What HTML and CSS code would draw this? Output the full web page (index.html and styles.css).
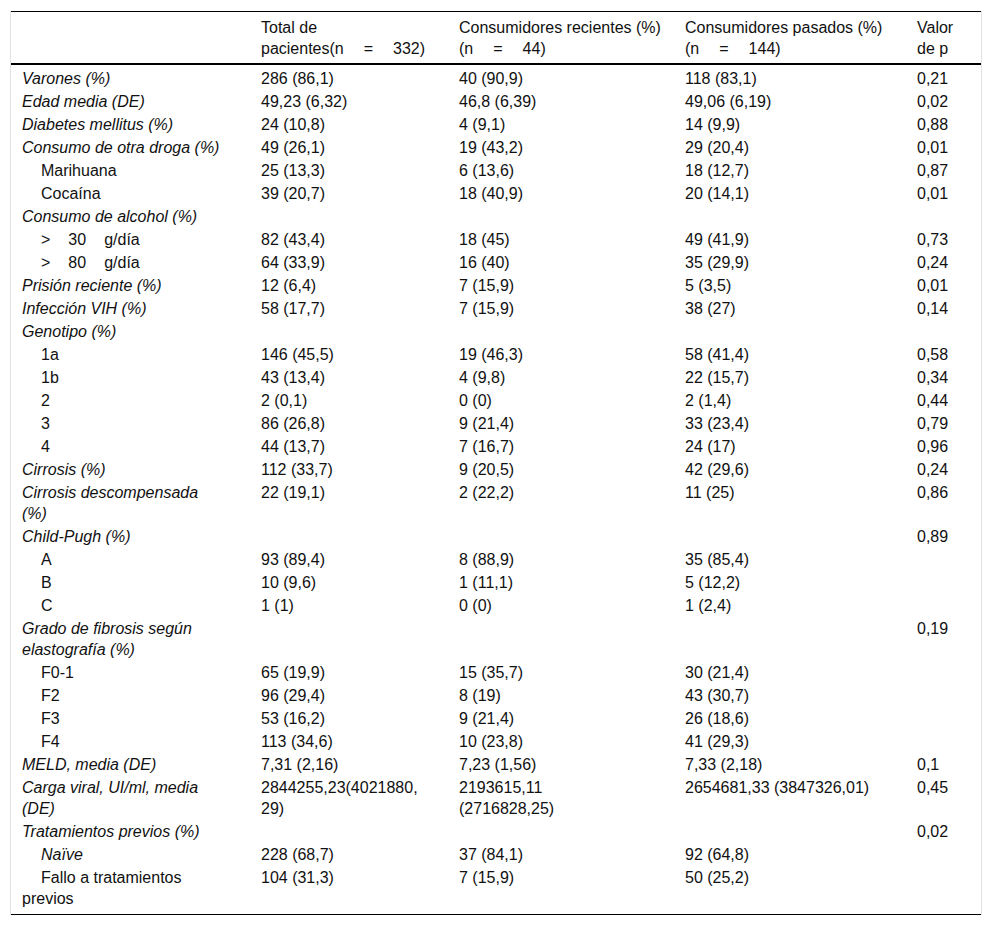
FILE: index.html
```html
<!DOCTYPE html>
<html lang="es">
<head>
<meta charset="utf-8">
<title>Tabla</title>
<link rel="stylesheet" href="styles.css">
</head>
<body>
<div class="wrap">
<table class="data">
<colgroup>
<col class="c1"><col class="c2"><col class="c3"><col class="c4"><col class="c5">
</colgroup>
<thead>
<tr>
<th></th>
<th>Total de<br>pacientes(n<span class="eq">=</span>332)</th>
<th>Consumidores recientes (%)<br>(n<span class="eq">=</span>44)</th>
<th>Consumidores pasados (%)<br>(n<span class="eq">=</span>144)</th>
<th>Valor<br>de p</th>
</tr>
</thead>
<tbody>
<tr><td class="lbl">Varones (%)</td><td>286 (86,1)</td><td>40 (90,9)</td><td>118 (83,1)</td><td>0,21</td></tr>
<tr><td class="lbl">Edad media (DE)</td><td>49,23 (6,32)</td><td>46,8 (6,39)</td><td>49,06 (6,19)</td><td>0,02</td></tr>
<tr><td class="lbl">Diabetes mellitus (%)</td><td>24 (10,8)</td><td>4 (9,1)</td><td>14 (9,9)</td><td>0,88</td></tr>
<tr><td class="lbl">Consumo de otra droga (%)</td><td>49 (26,1)</td><td>19 (43,2)</td><td>29 (20,4)</td><td>0,01</td></tr>
<tr><td class="sub">Marihuana</td><td>25 (13,3)</td><td>6 (13,6)</td><td>18 (12,7)</td><td>0,87</td></tr>
<tr><td class="sub">Cocaína</td><td>39 (20,7)</td><td>18 (40,9)</td><td>20 (14,1)</td><td>0,01</td></tr>
<tr><td class="lbl">Consumo de alcohol (%)</td><td></td><td></td><td></td><td></td></tr>
<tr><td class="sub">&gt;<span class="gap"></span>30<span class="gap"></span>g/día</td><td>82 (43,4)</td><td>18 (45)</td><td>49 (41,9)</td><td>0,73</td></tr>
<tr><td class="sub">&gt;<span class="gap"></span>80<span class="gap"></span>g/día</td><td>64 (33,9)</td><td>16 (40)</td><td>35 (29,9)</td><td>0,24</td></tr>
<tr><td class="lbl">Prisión reciente (%)</td><td>12 (6,4)</td><td>7 (15,9)</td><td>5 (3,5)</td><td>0,01</td></tr>
<tr><td class="lbl">Infección VIH (%)</td><td>58 (17,7)</td><td>7 (15,9)</td><td>38 (27)</td><td>0,14</td></tr>
<tr><td class="lbl">Genotipo (%)</td><td></td><td></td><td></td><td></td></tr>
<tr><td class="sub">1a</td><td>146 (45,5)</td><td>19 (46,3)</td><td>58 (41,4)</td><td>0,58</td></tr>
<tr><td class="sub">1b</td><td>43 (13,4)</td><td>4 (9,8)</td><td>22 (15,7)</td><td>0,34</td></tr>
<tr><td class="sub">2</td><td>2 (0,1)</td><td>0 (0)</td><td>2 (1,4)</td><td>0,44</td></tr>
<tr><td class="sub">3</td><td>86 (26,8)</td><td>9 (21,4)</td><td>33 (23,4)</td><td>0,79</td></tr>
<tr><td class="sub">4</td><td>44 (13,7)</td><td>7 (16,7)</td><td>24 (17)</td><td>0,96</td></tr>
<tr><td class="lbl">Cirrosis (%)</td><td>112 (33,7)</td><td>9 (20,5)</td><td>42 (29,6)</td><td>0,24</td></tr>
<tr><td class="lbl">Cirrosis descompensada<br>(%)</td><td>22 (19,1)</td><td>2 (22,2)</td><td>11 (25)</td><td>0,86</td></tr>
<tr><td class="lbl">Child-Pugh (%)</td><td></td><td></td><td></td><td>0,89</td></tr>
<tr><td class="sub">A</td><td>93 (89,4)</td><td>8 (88,9)</td><td>35 (85,4)</td><td></td></tr>
<tr><td class="sub">B</td><td>10 (9,6)</td><td>1 (11,1)</td><td>5 (12,2)</td><td></td></tr>
<tr><td class="sub">C</td><td>1 (1)</td><td>0 (0)</td><td>1 (2,4)</td><td></td></tr>
<tr><td class="lbl">Grado de fibrosis según<br>elastografía (%)</td><td></td><td></td><td></td><td>0,19</td></tr>
<tr><td class="sub">F0-1</td><td>65 (19,9)</td><td>15 (35,7)</td><td>30 (21,4)</td><td></td></tr>
<tr><td class="sub">F2</td><td>96 (29,4)</td><td>8 (19)</td><td>43 (30,7)</td><td></td></tr>
<tr><td class="sub">F3</td><td>53 (16,2)</td><td>9 (21,4)</td><td>26 (18,6)</td><td></td></tr>
<tr><td class="sub">F4</td><td>113 (34,6)</td><td>10 (23,8)</td><td>41 (29,3)</td><td></td></tr>
<tr><td class="lbl">MELD, media (DE)</td><td>7,31 (2,16)</td><td>7,23 (1,56)</td><td>7,33 (2,18)</td><td>0,1</td></tr>
<tr><td class="lbl">Carga viral, UI/ml, media<br>(DE)</td><td>2844255,23(4021880,<br>29)</td><td>2193615,11<br>(2716828,25)</td><td>2654681,33 (3847326,01)</td><td>0,45</td></tr>
<tr><td class="lbl">Tratamientos previos (%)</td><td></td><td></td><td></td><td>0,02</td></tr>
<tr><td class="sub lbl">Naïve</td><td>228 (68,7)</td><td>37 (84,1)</td><td>92 (64,8)</td><td></td></tr>
<tr class="last"><td class="sub">Fallo a tratamientos<br>previos</td><td>104 (31,3)</td><td>7 (15,9)</td><td>50 (25,2)</td><td></td></tr>
</tbody>
</table>
</div>
</body>
</html>
```

FILE: styles.css
```css
html, body {
  margin: 0;
  padding: 0;
  background: #ffffff;
}

body {
  font-family: "Liberation Sans", Arial, sans-serif;
  font-size: 16px;
  color: #111111;
}

.wrap {
  margin: 11px 10px 0 10px;
  border-left: 1px solid #e2e2e2;
  border-right: 1px solid #e2e2e2;
}

.data {
  width: 100%;
  table-layout: fixed;
  border-collapse: collapse;
  border-top: 1px solid #000000;
  border-bottom: 1px solid #000000;
}

.c1 { width: 239px; }
.c2 { width: 198px; }
.c3 { width: 226px; }
.c4 { width: 232px; }
.c5 { width: 75px; }

.data th,
.data td {
  text-align: left;
  vertical-align: top;
  white-space: nowrap;
  line-height: 21px;
  padding: 1px 0 1px 11px;
  font-weight: normal;
}

.data thead th {
  padding-top: 5px;
  padding-bottom: 4px;
  border-bottom: 2px solid #000000;
}

.data tbody tr:first-child td {
  padding-top: 3px;
}

.data tr.last td {
  padding-bottom: 5px;
}

.lbl {
  font-style: italic;
}

.sub {
  text-indent: 19px;
}

.eq {
  padding: 0 20px;
}

.gap {
  display: inline-block;
  width: 18px;
}
```
